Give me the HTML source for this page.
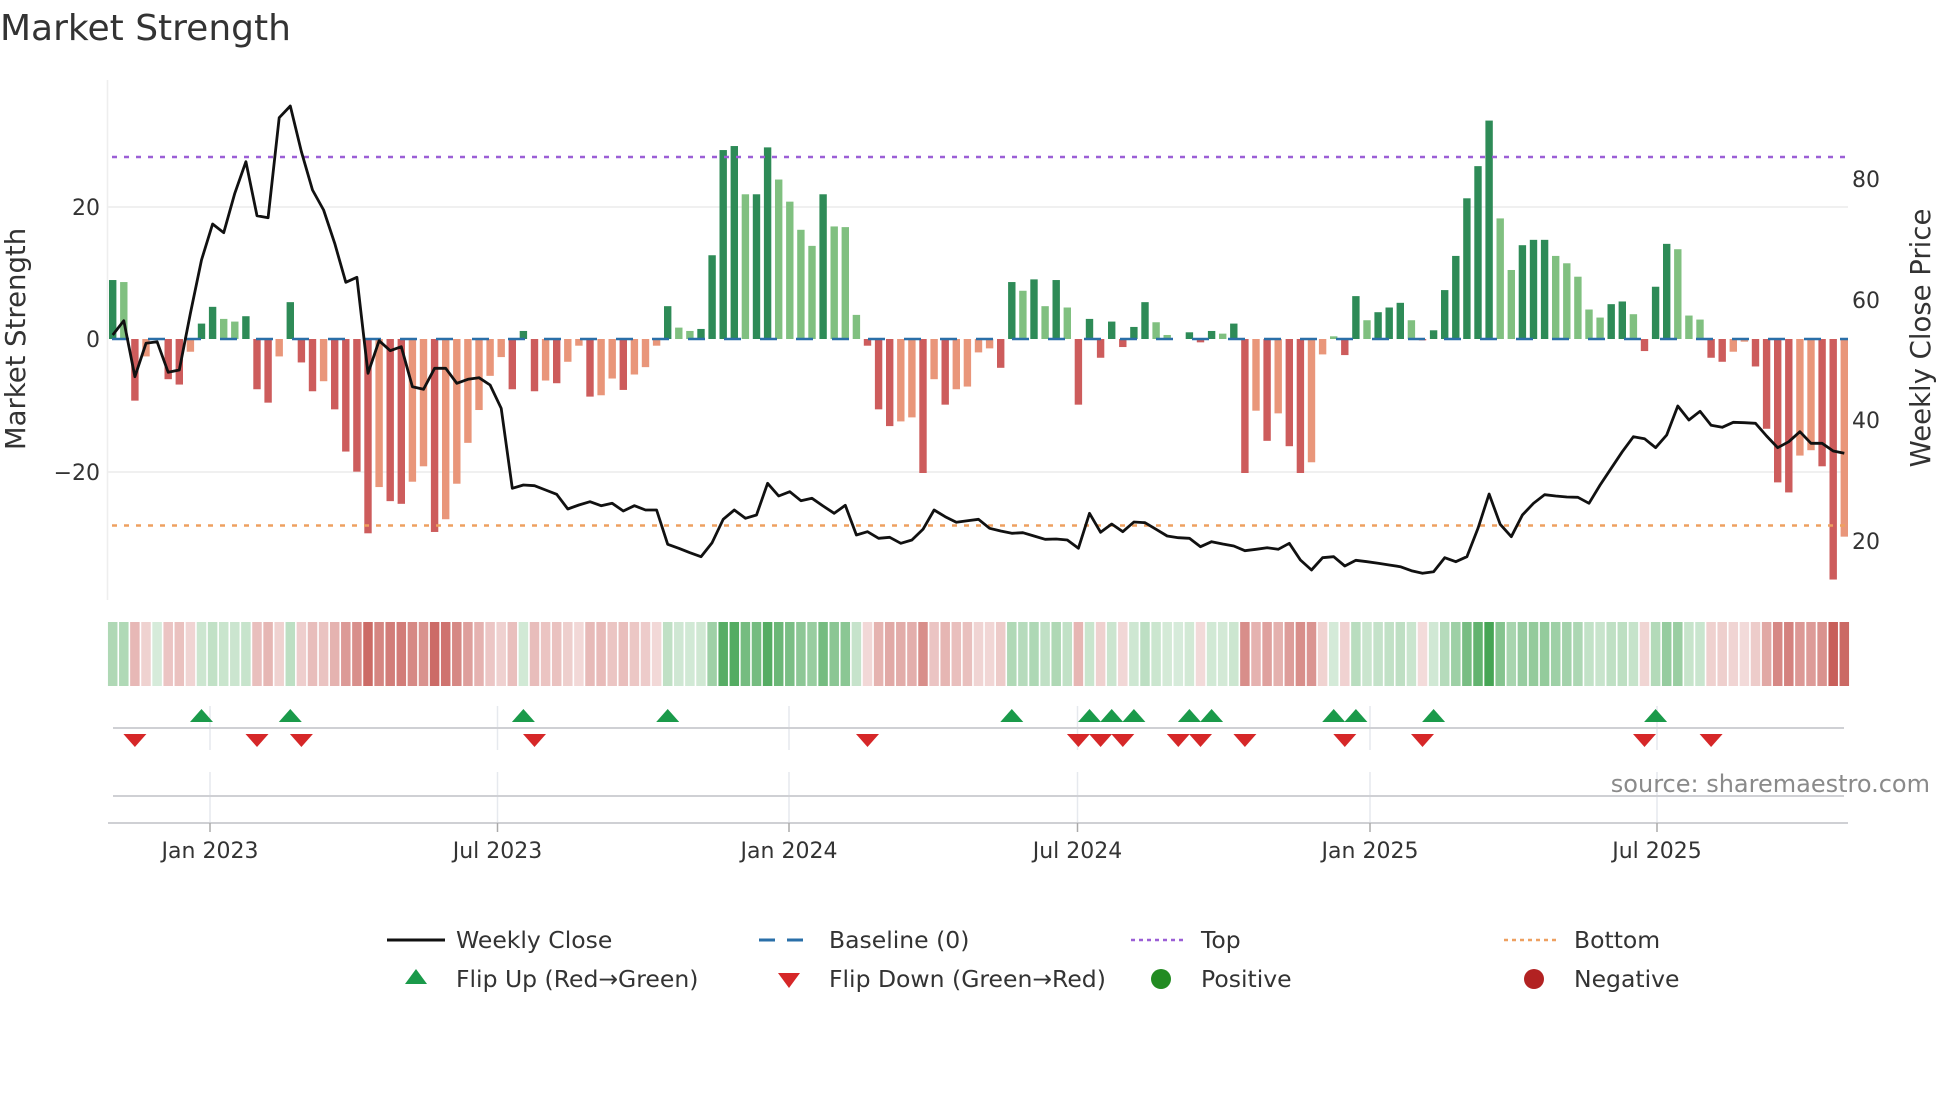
<!DOCTYPE html>
<html><head><meta charset="utf-8">
<style>
html,body{margin:0;padding:0;background:#fff;}
svg{display:block;font-family:"DejaVu Sans","Liberation Sans",sans-serif;}
</style></head>
<body>
<svg id="s" width="1960" height="1102" viewBox="0 0 1960 1102" xmlns="http://www.w3.org/2000/svg">
<rect width="1960" height="1102" fill="#fff"/>
<text x="0" y="40" font-size="36" fill="#333">Market Strength</text>
<line x1="108" y1="207" x2="1848" y2="207" stroke="#ececec" stroke-width="1.5"/>
<line x1="108" y1="472" x2="1848" y2="472" stroke="#ececec" stroke-width="1.5"/>
<line x1="107.5" y1="80" x2="107.5" y2="600" stroke="#eeeeee" stroke-width="1.5"/>
<g id="bars"></g>
<line x1="112" y1="157" x2="1848" y2="157" stroke="#9b5fd6" stroke-width="2.5" stroke-dasharray="5,7"/>
<line x1="112" y1="525.5" x2="1848" y2="525.5" stroke="#eea060" stroke-width="2.5" stroke-dasharray="5,7"/>
<line x1="112" y1="339" x2="1848" y2="339" stroke="#2a6fa8" stroke-width="2.5" stroke-dasharray="17,19"/>
<polyline id="price" fill="none" stroke="#111" stroke-width="2.8" stroke-linejoin="round"/>
<g font-size="22" fill="#333">
<text x="100" y="215" text-anchor="end">20</text>
<text x="100" y="347" text-anchor="end">0</text>
<text x="100" y="480" text-anchor="end">−20</text>
<text x="1852" y="187">80</text>
<text x="1852" y="308">60</text>
<text x="1852" y="428">40</text>
<text x="1852" y="549">20</text>
</g>
<text transform="translate(25,339) rotate(-90)" font-size="27.5" fill="#333" text-anchor="middle">Market Strength</text>
<text transform="translate(1930,338) rotate(-90)" font-size="27.5" fill="#333" text-anchor="middle">Weekly Close Price</text>
<g id="heat"></g>
<g id="vgrid" stroke="#e6e9ee" stroke-width="1.5"></g>
<line x1="113" y1="728" x2="1844" y2="728" stroke="#cfd0d4" stroke-width="2"/>
<line x1="113" y1="796" x2="1844" y2="796" stroke="#cfd0d4" stroke-width="2"/>
<line x1="108" y1="823" x2="1848" y2="823" stroke="#cfd0d4" stroke-width="2"/>
<g id="marks"></g>
<text x="1930" y="792" font-size="24" fill="#8a8a8a" text-anchor="end">source: sharemaestro.com</text>
<g id="ticks" font-size="22" fill="#333" text-anchor="middle"></g>
<g font-size="23.5" fill="#333">
<line x1="387" y1="940" x2="445" y2="940" stroke="#111" stroke-width="3"/>
<text x="456" y="948">Weekly Close</text>
<line x1="759" y1="940" x2="812" y2="940" stroke="#2a6fa8" stroke-width="3" stroke-dasharray="16,12"/>
<text x="829" y="948">Baseline (0)</text>
<line x1="1131" y1="940" x2="1185" y2="940" stroke="#9b5fd6" stroke-width="2.5" stroke-dasharray="4,4"/>
<text x="1201" y="948">Top</text>
<line x1="1504" y1="940" x2="1559" y2="940" stroke="#eea060" stroke-width="2.5" stroke-dasharray="4,4"/>
<text x="1574" y="948">Bottom</text>
<polygon points="416,969 427,984 405,984" fill="#1a9a4a"/>
<text x="456" y="987">Flip Up (Red→Green)</text>
<polygon points="778,973 800,973 789,988" fill="#d62728"/>
<text x="829" y="987">Flip Down (Green→Red)</text>
<circle cx="1161" cy="979" r="10" fill="#228b22"/>
<text x="1201" y="987">Positive</text>
<circle cx="1534" cy="979" r="10" fill="#b22222"/>
<text x="1574" y="987">Negative</text>
</g>
</svg>
<script>
(function(){
var NS="http://www.w3.org/2000/svg";
function el(t,a,p){var e=document.createElementNS(NS,t);for(var k in a)e.setAttribute(k,a[k]);p.appendChild(e);return e;}
var B="8.8d 8.5l -9.2d -2.6l 0d -6d -6.8d -1.9l 2.3d 4.8d 3l 2.6l 3.4d -7.5d -9.5d -2.6l 5.5d -3.5d -7.8d -6.3l -10.5d -16.8d -19.8d -29d -22.1l -24.2d -24.6d -21.3l -19l -28.8d -26.9l -21.6l -15.5l -10.6l -5.5l -2.7l -7.5d 1.2d -7.8d -6.2l -6.6d -3.4l -1l "+
"-8.6d -8.4l -5.9l -7.6d -5.3l -4.2l -1l 4.9d 1.7l 1.2l 1.5d 12.5d 28.2d 28.8d 21.6l 21.6d 28.6d 23.8l 20.5l 16.3l 13.9l 21.6d 16.8l 16.7l 3.6l -1d -10.5d -13d -12.3l -11.7l -20d -6l -9.8d -7.5l -7.1l -2l -1.4l -4.3d 8.5d 7.2l 8.9d "+
"4.9l 8.8d 4.7l -9.8d 3d -2.8d 2.6d -1.2d 1.8d 5.5d 2.5l 0.6l 0d 1d -0.5d 1.2d 0.8l 2.3d -20d -10.7l -15.2d -11.1l -16d -20d -18.4l -2.3l 0.4l -2.4d 6.4d 2.8l 4d 4.7d 5.4d 2.8l -0.2d 1.3d 7.3d 12.4d 21d 25.8d 32.6d "+
"18l 10.3l 14d 14.8d 14.8d 12.4l 11.3l 9.3l 4.4l 3.2l 5.2d 5.6d 3.7l -1.8d 7.8d 14.2d 13.4l 3.5l 2.9l -2.8d -3.4d -1.9l -0.4l -4.1d -13.4d -21.4d -22.9d -17.4l -16.6l -19d -35.9d -29.5l";
var arr=B.split(/\s+/);
var bars=document.getElementById('bars'),heat=document.getElementById('heat');
function X(i){return 112.7+11.1*i;}
var cols={pd:"#2e8b57",pl:"#80c080",nd:"#cd5c5c",nl:"#e9967a"};
for(var i=0;i<arr.length;i++){
 var s=arr[i],d=s.slice(-1),v=parseFloat(s);
 var h=Math.abs(v)*6.7;
 if(h>0.3){
  var c=cols[(v>=0?'p':'n')+d];
  el('rect',{x:X(i)-3.7,y:v>=0?339-h:339,width:7.4,height:h,fill:c},bars);
 }
 var t=Math.min(1,0.22+Math.abs(v)/32*0.78);
 var g=v>=0?[70,165,85]:[200,95,90];
 var r=Math.round(255+(g[0]-255)*t),gg=Math.round(255+(g[1]-255)*t),b=Math.round(255+(g[2]-255)*t);
 el('rect',{x:X(i)-5.55+0.8,y:622,width:9.5,height:64,fill:'rgb('+r+','+gg+','+b+')'},heat);
}
var P=[765,722,890,790,785,877,870,700,540,432,458,340,245,407,413,113,78,215,330,390,490,607,592,880,782,812,800,920,928,865,865,910,898,893,915,985,1225,1215,1217,1230,1243,1287,1275,
1265,1277,1270,1293,1277,1290,1290,1393,1405,1418,1430,1388,1318,1290,1315,1305,1210,1248,1235,1262,1255,1278,1300,1276,1365,1355,1375,1372,1390,1380,1348,1290,1310,1327,1322,1318,1345,1353,1360,1358,1368,
1378,1377,1380,1405,1300,1357,1332,1355,1326,1328,1348,1368,1373,1375,1400,1385,1392,1398,1412,1408,1403,1408,1390,1440,1470,1433,1430,1458,1441,1445,1450,1455,1460,1472,1480,1475,1433,1445,1430,1345,
1242,1333,1370,1305,1270,1244,1248,1251,1252,1270,1215,1165,1115,1070,1076,1103,1065,978,1020,994,1036,1042,1027,1028,1030,1068,1103,1085,1055,1090,1090,1113,1120];
var pts=[];for(var j=0;j<P.length;j++)pts.push(X(j).toFixed(1)+','+(80+P[j]/3).toFixed(1));
document.getElementById('price').setAttribute('points',pts.join(' '));
var ticks=[[210,"Jan 2023"],[497.5,"Jul 2023"],[789,"Jan 2024"],[1077.5,"Jul 2024"],[1370,"Jan 2025"],[1657,"Jul 2025"]];
var vg=document.getElementById('vgrid'),tk=document.getElementById('ticks');
ticks.forEach(function(t){
 el('line',{x1:t[0],y1:706,x2:t[0],y2:750},vg);
 el('line',{x1:t[0],y1:772,x2:t[0],y2:823},vg);
 el('line',{x1:t[0],y1:823,x2:t[0],y2:832,stroke:'#aaa','stroke-width':1.5},tk);
 var e=el('text',{x:t[0],y:858},tk);e.textContent=t[1];
});
var mk=document.getElementById('marks');
[8,16,37,50,81,88,90,92,97,99,110,112,119,139].forEach(function(i){var x=X(i);
 el('polygon',{points:x+',709 '+(x+11.5)+',722 '+(x-11.5)+',722',fill:'#1a9a4a'},mk);});
[2,13,17,38,68,87,89,91,96,98,102,111,118,138,144].forEach(function(i){var x=X(i);
 el('polygon',{points:(x-11.5)+',734 '+(x+11.5)+',734 '+x+',747',fill:'#d62728'},mk);});
})();
</script>
</body></html>
